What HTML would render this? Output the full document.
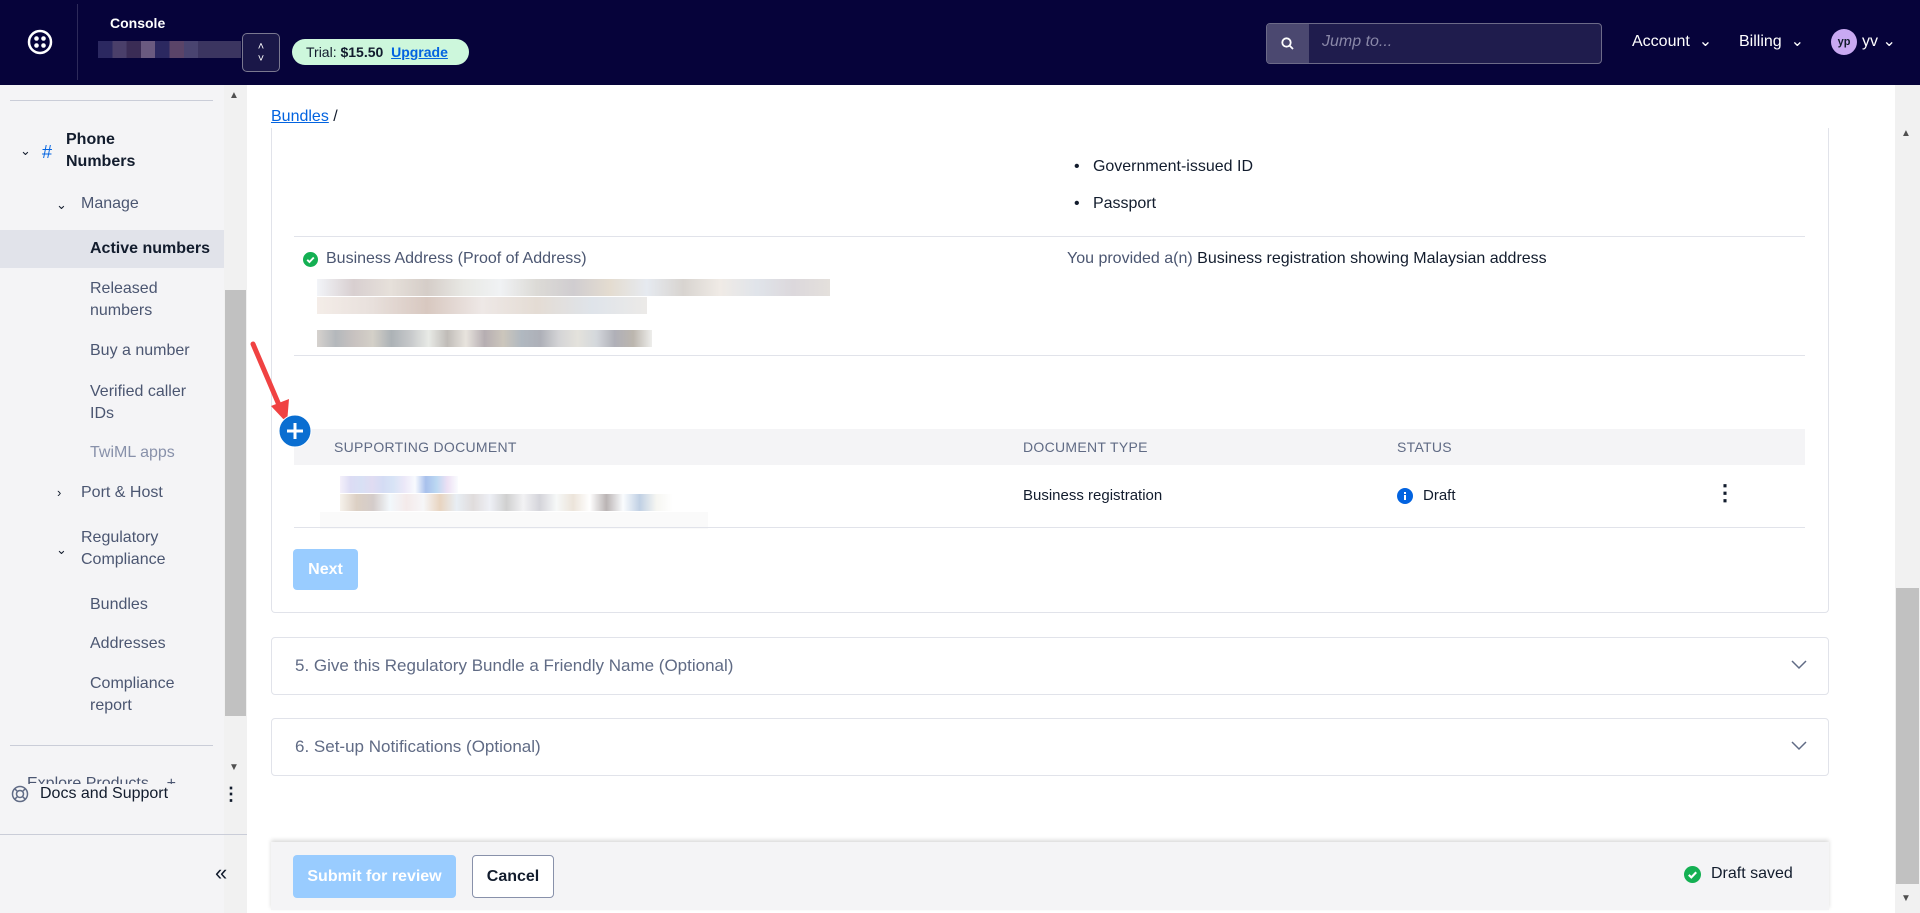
<!DOCTYPE html>
<html><head><meta charset="utf-8"><style>
*{box-sizing:border-box;margin:0;padding:0}
body{width:1920px;height:913px;overflow:hidden;position:relative;background:#fff;font-family:"Liberation Sans",sans-serif;color:#121c2d}
.a{position:absolute;white-space:nowrap}
.hdr{left:0;top:0;width:1920px;height:85px;background:#06033a}
.sb{left:0;top:85px;width:224px;height:828px;background:#f4f4f6}
.si{font-size:16px;color:#121c2d;line-height:22px}
.bl{position:absolute;height:17px}
.ln{position:absolute;height:1px;background:#e1e3ea}
.t{font-size:16px;color:#121c2d}
.th{font-size:14px;color:#606b85;letter-spacing:.3px}
</style></head><body>
<div class="a hdr"></div>
<svg class="a" style="left:27px;top:29px" width="26" height="26" viewBox="0 0 26 26"><circle cx="13" cy="13" r="11" fill="none" stroke="#fff" stroke-width="2.5"/><circle cx="9.5" cy="9.5" r="2.3" fill="#fff"/><circle cx="16.5" cy="9.5" r="2.3" fill="#fff"/><circle cx="9.5" cy="16.5" r="2.3" fill="#fff"/><circle cx="16.5" cy="16.5" r="2.3" fill="#fff"/></svg>
<div class="a" style="left:77px;top:4px;width:1px;height:76px;background:#2d2a5a"></div>
<div class="a" style="left:110px;top:15px;color:#fff;font-size:14px;font-weight:bold">Console</div>
<div class="a" style="left:98px;top:41px;width:143px;height:17px;background:linear-gradient(90deg,#2b2860 0 10%,#4a3f6a 10% 20%,#3a2c55 20% 30%,#6a5a80 30% 40%,#2b2860 40% 50%,#5a4468 50% 60%,#494470 60% 70%,#3b3560 70% 100%)"></div>
<div class="a" style="left:242px;top:33px;width:38px;height:39px;border:1px solid #7a7890;border-radius:5px;background:#1a1748;color:#fff;font-size:11px;text-align:center;line-height:12px;padding-top:7px">˄<br>˅</div>
<div class="a" style="left:292px;top:39px;width:177px;height:26px;border-radius:13px;background:#cdf7dc;font-size:14px;line-height:26px;padding-left:14px;color:#121c2d">Trial: <b>$15.50</b> &nbsp;<b style="color:#0263e0;text-decoration:underline">Upgrade</b></div>
<div class="a" style="left:1266px;top:23px;width:336px;height:41px;border:1px solid #6c6a88;border-radius:4px;background:#1f1c4d"></div>
<div class="a" style="left:1267px;top:24px;width:42px;height:39px;background:#4b4870;border-radius:3px 0 0 3px"></div>
<svg class="a" style="left:1280px;top:36px" width="16" height="16" viewBox="0 0 16 16"><circle cx="6.5" cy="6.5" r="4.2" fill="none" stroke="#fff" stroke-width="1.8"/><path d="M9.5 9.5L13 13" stroke="#fff" stroke-width="1.8"/></svg>
<div class="a" style="left:1322px;top:33px;color:#8a88a8;font-size:16px;font-style:italic">Jump to...</div>
<div class="a" style="left:1632px;top:31px;color:#fff;font-size:16px">Account &nbsp;⌄</div>
<div class="a" style="left:1739px;top:31px;color:#fff;font-size:16px">Billing &nbsp;⌄</div>
<div class="a" style="left:1831px;top:29px;width:26px;height:26px;border-radius:13px;background:#c9a9f2;font-size:11px;text-align:center;line-height:26px;color:#121c2d;font-weight:bold">yp</div>
<div class="a" style="left:1862px;top:31px;color:#fff;font-size:16px">yv ⌄</div>

<div class="a sb"></div>
<div class="a" style="left:224px;top:85px;width:23px;height:828px;background:#f1f1f1"></div>
<div class="a" style="left:225px;top:290px;width:21px;height:426px;background:#c1c1c1"></div>
<div class="a" style="left:229px;top:90px;font-size:10px;color:#505050">▲</div>
<div class="a" style="left:229px;top:762px;font-size:10px;color:#505050">▼</div>
<div class="a" style="left:10px;top:100px;width:203px;height:1px;background:#cacdd8"></div>
<div class="a si" style="left:20px;top:140px;font-size:13px">⌄</div>
<div class="a si" style="left:42px;top:141px;color:#0263e0;font-size:18px">#</div>
<div class="a si" style="left:66px;top:129px;font-weight:bold">Phone<br>Numbers</div>
<div class="a si" style="left:56px;top:194px;font-size:13px">⌄</div>
<div class="a si" style="left:81px;top:193px;color:#4b5671">Manage</div>
<div class="a" style="left:0;top:230px;width:224px;height:38px;background:#e1e3ea"></div>
<div class="a si" style="left:90px;top:238px;font-weight:bold">Active numbers</div>
<div class="a si" style="left:90px;top:278px;color:#4b5671">Released<br>numbers</div>
<div class="a si" style="left:90px;top:340px;color:#4b5671">Buy a number</div>
<div class="a si" style="left:90px;top:381px;color:#4b5671">Verified caller<br>IDs</div>
<div class="a si" style="left:90px;top:442px;color:#8891aa">TwiML apps</div>
<div class="a si" style="left:57px;top:482px;font-size:13px">›</div>
<div class="a si" style="left:81px;top:482px;color:#4b5671">Port &amp; Host</div>
<div class="a si" style="left:56px;top:539px;font-size:13px">⌄</div>
<div class="a si" style="left:81px;top:527px;color:#4b5671">Regulatory<br>Compliance</div>
<div class="a si" style="left:90px;top:594px;color:#4b5671">Bundles</div>
<div class="a si" style="left:90px;top:633px;color:#4b5671">Addresses</div>
<div class="a si" style="left:90px;top:673px;color:#4b5671">Compliance<br>report</div>
<div class="a" style="left:10px;top:745px;width:203px;height:1px;background:#cacdd8"></div>
<div class="a" style="left:0;top:770px;width:224px;height:14px;overflow:hidden"><div class="a si" style="left:27px;top:3px;color:#4b5671">Explore Products &nbsp; &nbsp;+</div></div>
<svg class="a" style="left:11px;top:785px" width="18" height="18" viewBox="0 0 18 18"><circle cx="9" cy="9" r="7.5" fill="none" stroke="#606b85" stroke-width="1.5"/><circle cx="9" cy="9" r="3.5" fill="none" stroke="#606b85" stroke-width="1.5"/><path d="M4 4l2.5 2.5M14 4l-2.5 2.5M4 14l2.5-2.5M14 14l-2.5-2.5" stroke="#606b85" stroke-width="1.5"/></svg>
<div class="a si" style="left:40px;top:783px">Docs and Support</div>
<div class="a si" style="left:222px;top:783px;font-weight:bold;font-size:18px">⋮</div>
<div class="a" style="left:0;top:834px;width:247px;height:1px;background:#cacdd8"></div>
<div class="a" style="left:215px;top:860px;font-size:22px;color:#121c2d">«</div>

<div class="a" style="left:271px;top:108px;font-size:16px"><span style="color:#0263e0;text-decoration:underline">Bundles</span> /</div>
<div class="a" style="left:1895px;top:85px;width:25px;height:828px;background:#f1f1f1"></div>
<div class="a" style="left:1896px;top:588px;width:23px;height:296px;background:#c1c1c1"></div>
<div class="a" style="left:1901px;top:128px;font-size:10px;color:#505050">▲</div>
<div class="a" style="left:1901px;top:893px;font-size:10px;color:#505050">▼</div>

<div class="a" style="left:271px;top:128px;width:1558px;height:485px;border:1px solid #e1e3ea;border-top:none;border-radius:0 0 4px 4px"></div>
<div class="a t" style="left:1074px;top:158px">•&nbsp;&nbsp;&nbsp;Government-issued ID</div>
<div class="a t" style="left:1074px;top:195px">•&nbsp;&nbsp;&nbsp;Passport</div>
<div class="ln" style="left:294px;top:236px;width:1511px"></div>
<svg class="a" style="left:303px;top:252px" width="15" height="15" viewBox="0 0 16 16"><circle cx="8" cy="8" r="8" fill="#14b053"/><path d="M4.5 8.3l2.4 2.4 4.6-4.8" stroke="#fff" stroke-width="2" fill="none"/></svg>
<div class="a t" style="left:326px;top:250px;color:#4b5671">Business Address (Proof of Address)</div>
<div class="a t" style="left:1067px;top:250px;color:#4b5671">You provided a(n) <span style="color:#121c2d">Business registration showing Malaysian address</span></div>
<div class="bl" style="left:317px;top:279px;width:513px;background:linear-gradient(90deg,#f2f4f8,#d8cfd0,#e6e0da,#d5cdc8,#e8e8e4,#f0f2f4,#dcdad6,#d0cdd0,#e4dcd0,#e6eaf0,#d8d4d0,#f0ebe6,#e0e4ea,#dcd8dc,#e4e0dc)"></div>
<div class="bl" style="left:317px;top:297px;width:330px;background:linear-gradient(90deg,#f4ede8,#e8e0dc,#d8c8c0,#eee8e6,#e4dcd4,#dfe4ea,#eceae8)"></div>
<div class="bl" style="left:317px;top:330px;width:335px;background:linear-gradient(90deg,#d6d2ce,#b4b8bc,#c8c2c0,#d4d0c8,#acb2b6,#c6c8ca,#e8eae6,#c0bcb8,#e8e4de,#b6aeb2,#ccc6bc,#b0b8c0,#aeb0b8,#d4d4d6,#e4e2dc,#d4d8dc,#b0b0b8,#bcb6ae,#eeeeec)"></div>
<div class="ln" style="left:294px;top:355px;width:1511px"></div>
<div class="a" style="left:294px;top:429px;width:1511px;height:36px;background:#f4f4f6"></div>
<div class="a th" style="left:334px;top:439px">SUPPORTING DOCUMENT</div>
<div class="a th" style="left:1023px;top:439px">DOCUMENT TYPE</div>
<div class="a th" style="left:1397px;top:439px">STATUS</div>
<svg class="a" style="left:245px;top:340px" width="70" height="110" viewBox="0 0 70 110"><path d="M8 4L37 72" stroke="#f04242" stroke-width="5" stroke-linecap="round"/><path d="M26 66l16 17 2-24z" fill="#f04242"/><circle cx="50" cy="91" r="16" fill="#0a6ed1" stroke="#fff" stroke-width="1"/><path d="M50 83v16M42 91h16" stroke="#fff" stroke-width="3"/></svg>
<div class="bl" style="left:340px;top:476px;width:118px;background:linear-gradient(90deg,#f4f0fa,#dcdcf4,#d8e0f4,#e0dcf2,#d4dcf4,#d8e4f6,#ece8f8,#f8fafe,#a8c0ec,#bcd8f2,#ece0f4,#fafcfe)"></div>
<div class="bl" style="left:340px;top:494px;width:333px;background:linear-gradient(90deg,#f6f2ec,#dcd0c4,#d4ccca,#f2f8fc,#f4eaea,#f6f6f8,#e8d4c0,#e8eef4,#e0dcdc,#eef0f6,#d0d0d0,#f2f2f4,#d4d4da,#f6f8f8,#ece4da,#fff,#bab4b4,#fafcfe,#c0d0e4,#f6f6f2,#fff)"></div>
<div class="a" style="left:320px;top:512px;width:388px;height:17px;background:#fafafa"></div>
<div class="a t" style="left:1023px;top:487px;font-size:15px">Business registration</div>
<svg class="a" style="left:1397px;top:488px" width="16" height="16" viewBox="0 0 16 16"><circle cx="8" cy="8" r="8" fill="#0263e0"/><rect x="7" y="7" width="2" height="5" fill="#fff"/><rect x="7" y="4" width="2" height="2" fill="#fff"/></svg>
<div class="a t" style="left:1423px;top:487px;font-size:15px">Draft</div>
<div class="a" style="left:1714px;top:480px;font-size:22px;font-weight:bold">⋮</div>
<div class="ln" style="left:294px;top:527px;width:1511px"></div>
<div class="a" style="left:293px;top:549px;width:65px;height:41px;border-radius:4px;background:#99ccff;color:#fff;font-weight:bold;font-size:16px;text-align:center;line-height:41px">Next</div>

<div class="a" style="left:271px;top:637px;width:1558px;height:58px;border:1px solid #e1e3ea;border-radius:4px"></div>
<div class="a t" style="left:295px;top:656px;color:#606b85;font-size:17px">5. Give this Regulatory Bundle a Friendly Name (Optional)</div>
<svg class="a" style="left:1790px;top:658px" width="18" height="12" viewBox="0 0 18 12"><path d="M2 3l7 7 7-7" stroke="#606b85" stroke-width="1.5" fill="none"/></svg>
<div class="a" style="left:271px;top:718px;width:1558px;height:58px;border:1px solid #e1e3ea;border-radius:4px"></div>
<div class="a t" style="left:295px;top:737px;color:#606b85;font-size:17px">6. Set-up Notifications (Optional)</div>
<svg class="a" style="left:1790px;top:739px" width="18" height="12" viewBox="0 0 18 12"><path d="M2 3l7 7 7-7" stroke="#606b85" stroke-width="1.5" fill="none"/></svg>

<div class="a" style="left:271px;top:842px;width:1558px;height:68px;background:#f4f4f6;box-shadow:0 -2px 4px rgba(0,0,0,.15)"></div>
<div class="a" style="left:293px;top:855px;width:163px;height:43px;border-radius:4px;background:#99ccff;color:#fff;font-weight:bold;font-size:16px;text-align:center;line-height:43px">Submit for review</div>
<div class="a" style="left:472px;top:855px;width:82px;height:43px;border-radius:4px;border:1px solid #8891aa;background:#fff;font-weight:bold;font-size:16px;text-align:center;line-height:41px">Cancel</div>
<svg class="a" style="left:1684px;top:866px" width="17" height="17" viewBox="0 0 16 16"><circle cx="8" cy="8" r="8" fill="#14b053"/><path d="M4.5 8.3l2.4 2.4 4.6-4.8" stroke="#fff" stroke-width="2" fill="none"/></svg>
<div class="a t" style="left:1711px;top:865px">Draft saved</div>
</body></html>
